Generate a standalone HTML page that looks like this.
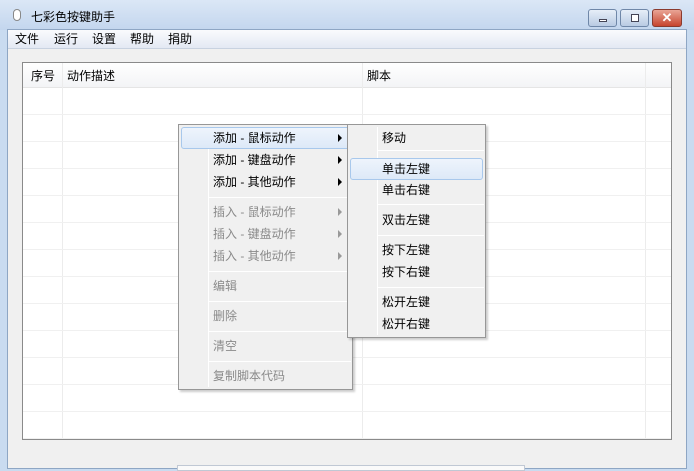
<!DOCTYPE html><html><head><meta charset="utf-8"><style>
*{margin:0;padding:0;box-sizing:border-box}
body{width:694px;height:469px;overflow:hidden;font-family:"Liberation Sans","Noto Sans CJK SC",sans-serif;font-size:12px;color:#000;background:#c9dbf0;position:relative}
.abs{position:absolute}
.title{left:0;top:0;width:694px;height:30px;background:linear-gradient(#dbe7f6,#c3d6ee);}
.client{left:7px;top:29px;width:680px;height:440px;background:#f0f0f0;border:1px solid #8ea6c4}
.menubar{left:8px;top:30px;width:678px;height:19px;background:linear-gradient(#fafbfd,#e3e9f3);border-bottom:1px solid #c8d2e0}
.table{left:22px;top:62px;width:650px;height:378px;background:#fff;border:1px solid #8a8a8a}
.hl{background:linear-gradient(#eef4fc,#dde9f8);border:1px solid #a8c8ec;border-radius:3px}
.menu{background:#f0f0f0;border:1px solid #979797;box-shadow:2px 2px 2px rgba(0,0,0,.2)}
.sep{height:1px;background:#d7d7d7;border-bottom:1px solid #fff}
.t{font-size:12px;line-height:14px;white-space:nowrap}
.g{color:#8a8a8a}
</style></head><body>
<div class="abs title"></div>
<div class="abs" style="left:13px;top:9px;width:8px;height:12px;border:1px solid #888;border-radius:4px;background:#fff"></div>
<div class="abs t" style="left:31px;top:10px">七彩色按键助手</div>
<div class="abs" style="left:588px;top:9px;width:29px;height:18px;border:1px solid #6f87a8;border-radius:3px;background:linear-gradient(#e6eef8,#b9cbe3)"><div class="abs" style="left:10px;top:9px;width:8px;height:3px;background:#fff;border:1px solid #445"></div></div>
<div class="abs" style="left:620px;top:9px;width:29px;height:18px;border:1px solid #6f87a8;border-radius:3px;background:linear-gradient(#e6eef8,#b9cbe3)"><div class="abs" style="left:10px;top:4px;width:8px;height:8px;border:1px solid #445;background:#fff"></div></div>
<div class="abs" style="left:652px;top:9px;width:30px;height:18px;border:1px solid #8a3a2e;border-radius:3px;background:linear-gradient(#e9a596,#c7442e);color:#fff;font-weight:bold;font-size:13px;text-align:center;line-height:15px">✕</div>
<div class="abs client"></div>
<div class="abs menubar"></div>
<div class="abs t" style="left:15px;top:32px">文件</div>
<div class="abs t" style="left:54px;top:32px">运行</div>
<div class="abs t" style="left:92px;top:32px">设置</div>
<div class="abs t" style="left:130px;top:32px">帮助</div>
<div class="abs t" style="left:168px;top:32px">捐助</div>
<div class="abs table">
<div class="abs" style="left:0;top:0;width:648px;height:25px;background:linear-gradient(#fff,#f3f4f6);border-bottom:1px solid #e5e5e5"></div>
<div class="abs t" style="left:8px;top:6px">序号</div>
<div class="abs t" style="left:44px;top:6px">动作描述</div>
<div class="abs t" style="left:344px;top:6px">脚本</div>
<div class="abs" style="left:39px;top:0;width:1px;height:376px;background:#ececec"></div>
<div class="abs" style="left:339px;top:0;width:1px;height:376px;background:#ececec"></div>
<div class="abs" style="left:622px;top:0;width:1px;height:376px;background:#ececec"></div>
<div class="abs" style="left:0;top:51px;width:648px;height:1px;background:#f0f0f0;box-shadow:0 27px #f0f0f0,0 54px #f0f0f0,0 81px #f0f0f0,0 108px #f0f0f0,0 135px #f0f0f0,0 162px #f0f0f0,0 189px #f0f0f0,0 216px #f0f0f0,0 243px #f0f0f0,0 270px #f0f0f0,0 297px #f0f0f0,0 324px #f0f0f0"></div>
</div>
<div class="abs" style="left:177px;top:465px;width:348px;height:6px;border:1px solid #c0c8d4;background:#fafafa"></div>
<div class="abs menu" style="left:178px;top:124px;width:175px;height:266px">
<div class="abs" style="left:29px;top:2px;width:1px;height:260px;background:#e2e3e3;border-right:1px solid #fff"></div>
<div class="abs hl" style="left:2px;top:2px;width:169px;height:22px"></div>
<div class="abs t" style="left:34px;top:6px">添加 - 鼠标动作</div>
<div class="abs t" style="left:34px;top:28px">添加 - 键盘动作</div>
<div class="abs t" style="left:34px;top:50px">添加 - 其他动作</div>
<div class="abs" style="left:159px;top:9px;border-left:4px solid #000;border-top:4px solid transparent;border-bottom:4px solid transparent;box-shadow:none"></div>
<div class="abs" style="left:159px;top:31px;border-left:4px solid #000;border-top:4px solid transparent;border-bottom:4px solid transparent"></div>
<div class="abs" style="left:159px;top:53px;border-left:4px solid #000;border-top:4px solid transparent;border-bottom:4px solid transparent"></div>
<div class="abs sep" style="left:30px;top:72px;width:142px"></div>
<div class="abs t g" style="left:34px;top:80px">插入 - 鼠标动作</div>
<div class="abs t g" style="left:34px;top:102px">插入 - 键盘动作</div>
<div class="abs t g" style="left:34px;top:124px">插入 - 其他动作</div>
<div class="abs" style="left:159px;top:83px;border-left:4px solid #999;border-top:4px solid transparent;border-bottom:4px solid transparent"></div>
<div class="abs" style="left:159px;top:105px;border-left:4px solid #999;border-top:4px solid transparent;border-bottom:4px solid transparent"></div>
<div class="abs" style="left:159px;top:127px;border-left:4px solid #999;border-top:4px solid transparent;border-bottom:4px solid transparent"></div>
<div class="abs sep" style="left:30px;top:146px;width:142px"></div>
<div class="abs t g" style="left:34px;top:154px">编辑</div>
<div class="abs sep" style="left:30px;top:176px;width:142px"></div>
<div class="abs t g" style="left:34px;top:184px">删除</div>
<div class="abs sep" style="left:30px;top:206px;width:142px"></div>
<div class="abs t g" style="left:34px;top:214px">清空</div>
<div class="abs sep" style="left:30px;top:236px;width:142px"></div>
<div class="abs t g" style="left:34px;top:244px">复制脚本代码</div>
</div>
<div class="abs menu" style="left:347px;top:124px;width:139px;height:214px">
<div class="abs" style="left:29px;top:2px;width:1px;height:208px;background:#e2e3e3;border-right:1px solid #fff"></div>
<div class="abs t" style="left:34px;top:6px">移动</div>
<div class="abs sep" style="left:30px;top:25px;width:106px"></div>
<div class="abs hl" style="left:2px;top:33px;width:133px;height:22px"></div>
<div class="abs t" style="left:34px;top:37px">单击左键</div>
<div class="abs t" style="left:34px;top:58px">单击右键</div>
<div class="abs sep" style="left:30px;top:79px;width:106px"></div>
<div class="abs t" style="left:34px;top:88px">双击左键</div>
<div class="abs sep" style="left:30px;top:110px;width:106px"></div>
<div class="abs t" style="left:34px;top:118px">按下左键</div>
<div class="abs t" style="left:34px;top:140px">按下右键</div>
<div class="abs sep" style="left:30px;top:162px;width:106px"></div>
<div class="abs t" style="left:34px;top:170px">松开左键</div>
<div class="abs t" style="left:34px;top:192px">松开右键</div>
</div>
</body></html>
